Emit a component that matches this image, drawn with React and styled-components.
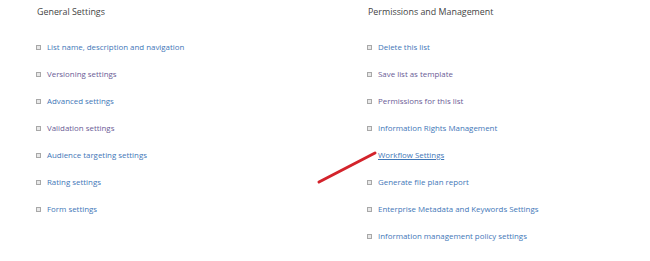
import styled, { createGlobalStyle } from 'styled-components';

const Global = createGlobalStyle`
  html, body { margin: 0; padding: 0; background: #fff; }
  body { font-family: "Open Sans", "Liberation Sans", sans-serif; }
`;

const Page = styled.main`
  position: relative;
  width: 650px;
  height: 261px;
  display: grid;
  grid-template-columns: 331px 1fr;
  padding: 4px 0 0 36px;
  box-sizing: border-box;
  overflow: hidden;
`;

const Section = styled.section`
  display: flex;
  flex-direction: column;
`;

const Heading = styled.h2`
  margin: 0 0 20px 1px;
  font-size: 8.9px;
  font-weight: 400;
  color: #444;
  line-height: 16px;
`;

const List = styled.ul`
  list-style: none;
  margin: 0;
  padding: 0;
  display: flex;
  flex-direction: column;
  gap: 13px;
`;

const Item = styled.li`
  display: flex;
  align-items: center;
  height: 14px;
  font-size: 7.9px;
  line-height: 14px;
`;

const Bullet = styled.span`
  width: 3px;
  height: 3px;
  border: 1px solid #a8a8a8;
  background: #e8e8e8;
  margin-right: 6px;
  visibility: ${(p) => (p.$hidden ? 'hidden' : 'visible')};
`;

const Link = styled.a`
  color: ${(p) => (p.$visited ? '#6a5c96' : '#3f77b8')};
  text-decoration: ${(p) => (p.$underline ? 'underline' : 'none')};
  cursor: pointer;
`;

const Arrow = styled.svg`
  position: absolute;
  left: 314px;
  top: 148px;
`;

const general = [
  { label: 'List name, description and navigation' },
  { label: 'Versioning settings', visited: true },
  { label: 'Advanced settings' },
  { label: 'Validation settings', visited: true },
  { label: 'Audience targeting settings' },
  { label: 'Rating settings' },
  { label: 'Form settings' },
];

const permissions = [
  { label: 'Delete this list' },
  { label: 'Save list as template', visited: true },
  { label: 'Permissions for this list', visited: true },
  { label: 'Information Rights Management' },
  { label: 'Workflow Settings', underline: true, noBullet: true },
  { label: 'Generate file plan report' },
  { label: 'Enterprise Metadata and Keywords Settings' },
  { label: 'Information management policy settings' },
];

const Column = ({ title, items }) => (
  <Section>
    <Heading>{title}</Heading>
    <List>
      {items.map((it) => (
        <Item key={it.label}>
          <Bullet $hidden={it.noBullet} />
          <Link $visited={it.visited} $underline={it.underline}>
            {it.label}
          </Link>
        </Item>
      ))}
    </List>
  </Section>
);

export default function App() {
  return (
    <>
      <Global />
      <Page>
        <Column title="General Settings" items={general} />
        <Column title="Permissions and Management" items={permissions} />
        <Arrow width="70" height="40" viewBox="0 0 70 40">
          <line x1="5" y1="34" x2="61" y2="5" stroke="#d3232b" strokeWidth="3" strokeLinecap="round" />
        </Arrow>
      </Page>
    </>
  );
}
